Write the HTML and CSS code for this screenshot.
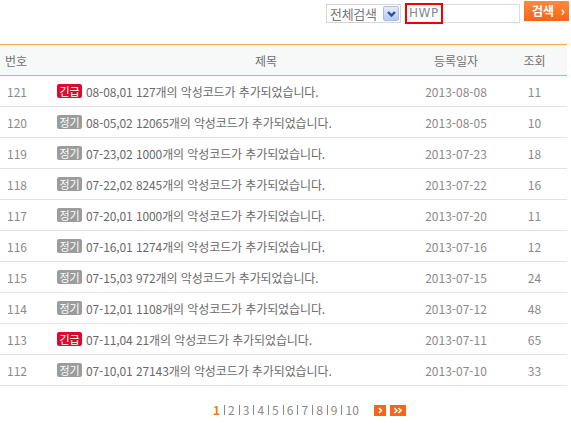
FILE: index.html
```html
<!DOCTYPE html>
<html lang="ko">
<head>
<meta charset="utf-8">
<title>공지사항</title>
<link rel="stylesheet" href="styles.css">
</head>
<body>
<div class="board">
  <form class="search">
    <div class="select">
      <span class="select-label">전체검색</span>
      <span class="select-arrow">
        <svg width="11" height="8" viewBox="0 0 11 8"><path d="M2 2 L5.5 5.5 L9 2" fill="none" stroke="#2f4f8f" stroke-width="2.4"/></svg>
      </span>
    </div>
    <div class="keyword"><span class="keyword-mark">HWP</span></div>
    <button type="button" class="search-btn">검색<span class="search-arrow">&#8250;</span></button>
  </form>

  <div class="list">
    <div class="row head">
      <div class="c-num">번호</div>
      <div class="c-title">제목</div>
      <div class="c-date">등록일자</div>
      <div class="c-view">조회</div>
    </div>
    <div class="row"><div class="c-num">121</div><div class="c-title"><span class="tag urgent">긴급</span>08-08,01 127개의 악성코드가 추가되었습니다.</div><div class="c-date">2013-08-08</div><div class="c-view">11</div></div>
    <div class="row"><div class="c-num">120</div><div class="c-title"><span class="tag regular">정기</span>08-05,02 12065개의 악성코드가 추가되었습니다.</div><div class="c-date">2013-08-05</div><div class="c-view">10</div></div>
    <div class="row"><div class="c-num">119</div><div class="c-title"><span class="tag regular">정기</span>07-23,02 1000개의 악성코드가 추가되었습니다.</div><div class="c-date">2013-07-23</div><div class="c-view">18</div></div>
    <div class="row"><div class="c-num">118</div><div class="c-title"><span class="tag regular">정기</span>07-22,02 8245개의 악성코드가 추가되었습니다.</div><div class="c-date">2013-07-22</div><div class="c-view">16</div></div>
    <div class="row"><div class="c-num">117</div><div class="c-title"><span class="tag regular">정기</span>07-20,01 1000개의 악성코드가 추가되었습니다.</div><div class="c-date">2013-07-20</div><div class="c-view">11</div></div>
    <div class="row"><div class="c-num">116</div><div class="c-title"><span class="tag regular">정기</span>07-16,01 1274개의 악성코드가 추가되었습니다.</div><div class="c-date">2013-07-16</div><div class="c-view">12</div></div>
    <div class="row"><div class="c-num">115</div><div class="c-title"><span class="tag regular">정기</span>07-15,03 972개의 악성코드가 추가되었습니다.</div><div class="c-date">2013-07-15</div><div class="c-view">24</div></div>
    <div class="row"><div class="c-num">114</div><div class="c-title"><span class="tag regular">정기</span>07-12,01 1108개의 악성코드가 추가되었습니다.</div><div class="c-date">2013-07-12</div><div class="c-view">48</div></div>
    <div class="row"><div class="c-num">113</div><div class="c-title"><span class="tag urgent">긴급</span>07-11,04 21개의 악성코드가 추가되었습니다.</div><div class="c-date">2013-07-11</div><div class="c-view">65</div></div>
    <div class="row"><div class="c-num">112</div><div class="c-title"><span class="tag regular">정기</span>07-10,01 27143개의 악성코드가 추가되었습니다.</div><div class="c-date">2013-07-10</div><div class="c-view">33</div></div>
  </div>

  <div class="paging">
    <span class="page current">1</span><span class="sep"></span>
    <span class="page">2</span><span class="sep"></span>
    <span class="page">3</span><span class="sep"></span>
    <span class="page">4</span><span class="sep"></span>
    <span class="page">5</span><span class="sep"></span>
    <span class="page">6</span><span class="sep"></span>
    <span class="page">7</span><span class="sep"></span>
    <span class="page">8</span><span class="sep"></span>
    <span class="page">9</span><span class="sep"></span>
    <span class="page">10</span>
    <span class="nav next">
      <svg width="12" height="11" viewBox="0 0 12 11"><path d="M5 3 L7.5 5.5 L5 8" fill="none" stroke="#fff" stroke-width="1.6"/></svg>
    </span>
    <span class="nav last">
      <svg width="16" height="11" viewBox="0 0 16 11"><path d="M4.5 3 L7 5.5 L4.5 8 M8.5 3 L11 5.5 L8.5 8" fill="none" stroke="#fff" stroke-width="1.6"/></svg>
    </span>
  </div>
</div>
</body>
</html>
```
FILE: styles.css
```css
html, body {
  margin: 0;
  padding: 0;
  background: #fff;
}

body {
  font-family: "Noto Sans CJK KR", "Noto Sans", sans-serif;
  font-size: 12px;
  color: #707070;
}

.board {
  width: 567px;
}

/* search bar */
.search {
  display: flex;
  justify-content: flex-end;
  align-items: flex-start;
  height: 44px;
  margin: 0 -2px 0 0;
}

.select {
  display: flex;
  align-items: center;
  justify-content: space-between;
  box-sizing: border-box;
  width: 75px;
  height: 19px;
  margin-top: 4px;
  border: 1px solid #d6d6d6;
  background: #fff;
}

.select-label {
  padding-left: 3px;
  font-size: 13px;
  line-height: 17px;
  color: #777;
  letter-spacing: -0.3px;
}

.select-arrow {
  display: flex;
  align-items: center;
  justify-content: center;
  width: 16px;
  height: 15px;
  margin-right: 1px;
  border-radius: 2px;
  background: linear-gradient(#e6eefc, #b4c9f2);
  border: 1px solid #a9bde6;
  box-sizing: border-box;
}

.keyword {
  display: flex;
  box-sizing: border-box;
  width: 115px;
  height: 19px;
  margin: 4px 4px 0 4px;
  border: 1px solid #dcdcdc;
  background: #fff;
}

.keyword-mark {
  box-sizing: border-box;
  height: 21px;
  margin: -2px 0 0 -1px;
  padding: 0 2px 0 2px;
  border: 2px solid #f00000;
  font-family: "DejaVu Sans", sans-serif;
  font-size: 12px;
  line-height: 17px;
  color: #888;
  letter-spacing: 0.5px;
}

.search-btn {
  display: flex;
  align-items: center;
  justify-content: space-between;
  box-sizing: border-box;
  width: 45px;
  height: 20px;
  margin-top: 1px;
  padding: 0 4px 0 8px;
  border: 0;
  background: linear-gradient(#ff8a40, #f56417);
  color: #fff;
  font-family: "Noto Sans CJK KR", sans-serif;
  font-size: 12px;
  font-weight: bold;
  line-height: 20px;
}

.search-arrow {
  font-size: 13px;
  font-weight: bold;
}

/* board list */
.list {
  border-top: 1px solid #f8a858;
}

.row {
  display: grid;
  grid-template-columns: 52px 358px 92px 65px;
  align-items: center;
  height: 30px;
  border-bottom: 1px solid #e2e2e2;
}

.row.head {
  height: 30px;
  background: #f7f9f8;
  border-bottom: 1px solid #f8a858;
  color: #707070;
}

.c-num {
  padding-left: 7px;
  color: #8a8a8a;
}

.head .c-num {
  padding-left: 5px;
  color: #707070;
}

.c-title {
  display: flex;
  align-items: center;
  padding-left: 5px;
  white-space: nowrap;
  color: #6a6a6a;
  letter-spacing: -0.1px;
}

.head .c-title {
  justify-content: center;
  padding-left: 70px;
  letter-spacing: 0;
  color: #707070;
}

.c-date,
.c-view {
  text-align: center;
  color: #8a8a8a;
}

.head .c-date,
.head .c-view {
  color: #707070;
}

.tag {
  display: inline-block;
  width: 25px;
  height: 14px;
  margin-right: 4px;
  border-radius: 2px;
  color: #fff;
  font-size: 11px;
  line-height: 14px;
  text-align: center;
  letter-spacing: 0;
}

.tag.urgent {
  background: #dc0a2e;
}

.tag.regular {
  background: #9c9c9c;
}

/* paging */
.paging {
  display: flex;
  align-items: center;
  padding: 17px 0 0 213px;
  height: 14px;
  color: #8a8a8a;
  font-size: 12px;
}

.page {
  line-height: 14px;
}

.page.current {
  color: #f07d10;
  font-weight: bold;
}

.sep {
  width: 1px;
  height: 10px;
  margin: 0 3px 0 4px;
  background: #8a8a8a;
}

.nav {
  display: flex;
  height: 11px;
  background: #f5661a;
}

.nav.next {
  margin-left: 15px;
}

.nav.last {
  margin-left: 4px;
}
```
